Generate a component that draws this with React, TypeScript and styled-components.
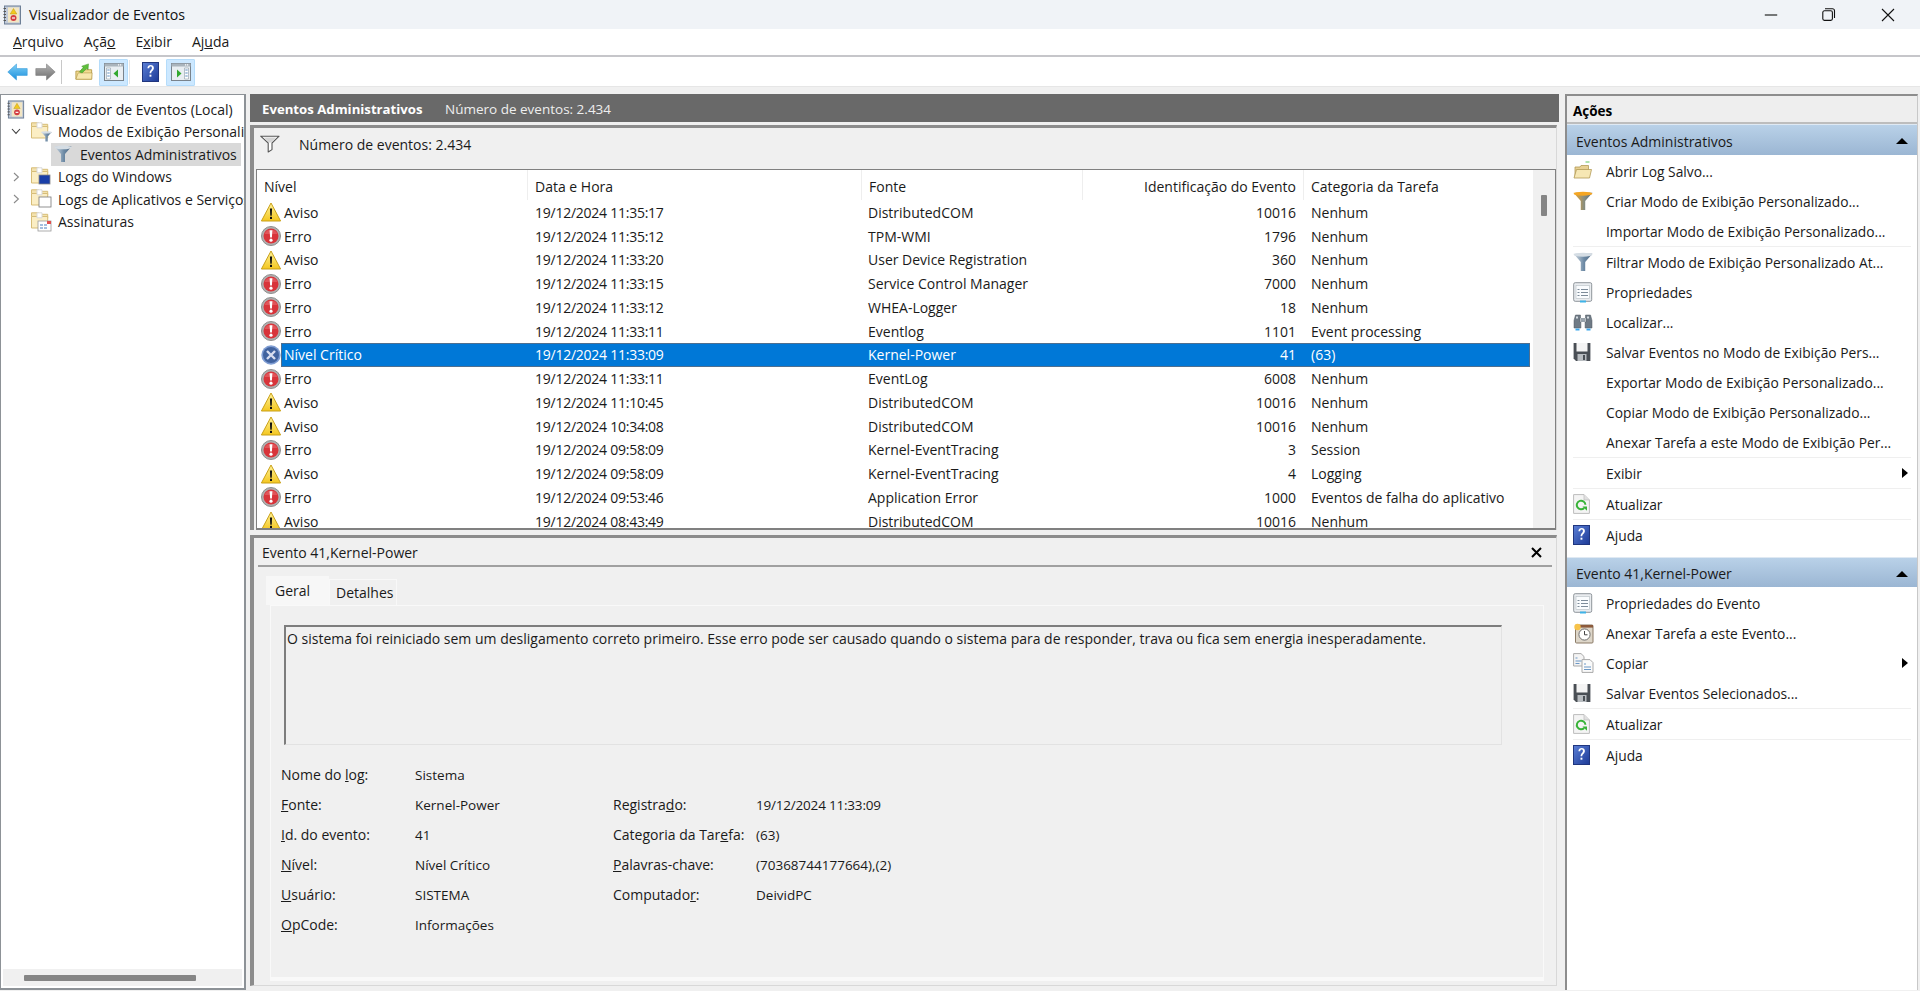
import React from "react";
import styled, { createGlobalStyle } from "styled-components";

const GlobalStyle = createGlobalStyle`
  html, body { margin: 0; padding: 0; height: 100%; overflow: hidden; background: #f0f0f0; }
  #root { height: 100%; }
  * { box-sizing: border-box; }
  body { font-family: "Open Sans", "Noto Sans", "Liberation Sans", sans-serif; font-size: 14px; color: #1a1a1a; }
`;

const Shell = styled.div`display: flex; flex-direction: column; width: 1920px; height: 991px; overflow: hidden;`;
const TitleBar = styled.div`height: 29px; background: #f0f3f7; display: flex; align-items: center; padding-left: 3px; gap: 6px; font-size: 14.2px; color: #111;`;
const TitleText = styled.span`flex: 1;`;
const WinButtons = styled.div`display: flex; align-items: center; margin-right: 3px;`;
const WinButton = styled.div`width: 58.5px; height: 29px; display: flex; align-items: center; justify-content: center;`;
const MenuBar = styled.div`height: 28px; background: #fff; border-bottom: 2px solid #c6c6ca; display: flex; align-items: center; padding: 0 0 2px 13px; gap: 20px; font-size: 14px;`;
const Toolbar = styled.div`height: 30px; background: #fff; border-bottom: 1px solid #e6e6e6; display: flex; align-items: center; padding: 1px 0 0 3px;`;
const ToolBtn = styled.div<{ $active?: boolean; $w: number; $ml?: number }>`
  width: ${p => p.$w}px; height: 27px; flex: none; display: flex; align-items: center; justify-content: center;
  margin-left: ${p => p.$ml ?? 0}px;
  background: ${p => (p.$active ? "#cce8ff" : "transparent")};
  border: 1px solid ${p => (p.$active ? "#b5dcfa" : "transparent")};
  border-radius: 1px;
`;
const ToolSep = styled.div`width: 1px; height: 24px; background: #c8c8c8; margin: 0 12px 0 2px;`;
const ToolSepLight = styled.div`width: 1px; height: 24px; background: #e6e6e6; margin: 0 11px 0 1px;`;
const Main = styled.div`flex: 1; min-height: 0; display: flex; padding: 7px 2px 1px 0; gap: 4px;`;

const LeftPane = styled.div`width: 246px; flex: none; background: #fff; border: 1px solid #8d9297; border-width: 1px 2px 2px 1px; display: flex; flex-direction: column; min-height: 0;`;
const Tree = styled.div`flex: 1; padding-top: 3px; overflow: hidden; white-space: nowrap;`;
const TreeRow = styled.div<{ $indent: number; $sel?: boolean }>`
  height: 22.5px; display: flex; align-items: center; padding-left: ${p => p.$indent}px; gap: 4px;
  background: ${p => (p.$sel ? "#d9d9d9" : "transparent")};
  ${p => p.$sel ? "margin: 0 3px 0 50px; padding-left: 3px;" : ""}
  & > svg { flex: none; }
`;
const TreeLabel = styled.span<{ $ml?: number }>`margin-left: ${p => p.$ml ?? 2}px; flex: none;`;
const Chevron = styled.span`width: 12px; flex: none; display: flex; justify-content: center; margin-right: 5px;`;
const HBar = styled.div`height: 17px; background: #f0f0f0; margin: 0 2px 2px 2px; display: flex; align-items: center; padding-left: 21px;`;
const HThumb = styled.div`width: 172px; height: 6px; background: #858585; border-radius: 1px;`;

const Center = styled.div`flex: 1; min-width: 0; display: flex; flex-direction: column; padding-right: 2px;`;
const CenterHead = styled.div`height: 28px; background: #696969; display: flex; align-items: center; padding: 2px 0 0 12px; font-size: 13.5px; color: #eee; flex: none;`;
const CenterTitle = styled.b`color: #fff; font-weight: 700; font-size: 13.2px; width: 183px;`;
const Frame = styled.div<{ $h: number }>`
  height: ${p => p.$h}px; flex: none; margin: 3px 2px 0 0; background: #f0f0f0;
  border-top: 3px solid #8c8c8c; border-left: 4px solid #8c8c8c; border-right: 1px solid #d8d8d8;
  display: flex; flex-direction: column; min-height: 0;
`;
const LowerFrame = styled(Frame)`border-bottom: 1px solid #d8d8d8;`;
const FilterBar = styled.div`height: 41px; flex: none; display: flex; align-items: flex-start; padding: 7px 0 0 6px; gap: 19px; font-size: 14px;`;
const List = styled.div`flex: 1; min-height: 0; margin-left: 2px; background: #fff; border: 1px solid #808080; border-bottom-width: 2px; display: flex; overflow: hidden;`;
const ListBody = styled.div`flex: 1; min-width: 0; display: flex; flex-direction: column; padding-right: 3px;`;
const COLS = "247px 333px 221px 221px 1fr";
const HeadRow = styled.div`height: 30.5px; flex: none; display: grid; grid-template-columns: 270px 334px 221px 221px 1fr;`;
const HeadCell = styled.div<{ $right?: boolean }>`
  font-size: 14px; padding: 2px 7px 0; height: 30px; display: flex; align-items: center; border-left: 1px solid #eee;
  justify-content: ${p => (p.$right ? "flex-end" : "flex-start")};
  &:first-child { border-left: 0; }
`;
const Row = styled.div`height: 23.75px; flex: none; display: flex;`;
const IconSlot = styled.div`width: 24px; flex: none; display: flex; align-items: center; justify-content: flex-start; padding-left: 4px;`;
const Cells = styled.div<{ $sel?: boolean }>`
  flex: 1; display: grid; grid-template-columns: ${COLS}; align-items: center; font-size: 14px;
  background: ${p => (p.$sel ? "#0078d7" : "transparent")};
  color: ${p => (p.$sel ? "#fff" : "#1a1a1a")};
  ${p => p.$sel ? "outline: 1px solid #4e6f90; outline-offset: -1px;" : ""}
`;
const Cell = styled.div<{ $right?: boolean }>`
  padding: 0 7px; white-space: nowrap; overflow: hidden; text-align: ${p => (p.$right ? "right" : "left")};
  &:first-child { padding-left: 3px; }
  &:nth-child(2) { letter-spacing: -0.25px; }
  &:last-child { padding-left: 8px; }
`;
const VTrack = styled.div`width: 22px; flex: none; background: #f0f0f0; padding: 25px 0 0 8px;`;
const VThumb = styled.div`width: 6px; height: 21px; background: #858585; border-radius: 1px;`;

const Divider = styled.div`height: 2px; flex: none;`;
const DetailHead = styled.div`height: 29px; flex: none; margin: 0 4px 0 4px; display: flex; align-items: center; justify-content: space-between; padding: 2px 10px 0 4px; border-bottom: 2px solid #a0a0a0; font-size: 14px;`;
const Tabs = styled.div`flex: none; display: flex; align-items: flex-end; margin: 9px 0 0 12px; height: 29px;`;
const Tab = styled.div<{ $on?: boolean; $w: number }>`
  width: ${p => p.$w}px; height: ${p => (p.$on ? 29 : 26)}px; display: flex; align-items: center;
  background: ${p => (p.$on ? "#f7f7f7" : "#f0f0f0")};
  border: 1px solid ${p => (p.$on ? "#f7f7f7" : "#f8f8f8")};
  border-bottom: 0;
  padding: 0 0 ${p => (p.$on ? 2 : 0)}px ${p => (p.$on ? 8 : 6)}px;
  font-size: 14px;
`;
const TabPanel = styled.div`flex: 1; min-height: 0; margin: 0 12px 4px 16px; background: #f0f0f0; border: 1px solid #f9f9f9; border-width: 1px 1px 4px 1px; padding: 19px 0 0 13px;`;
const MessageBox = styled.div`width: 1218px; height: 120px; border: 1px solid #e2e2e2; border-top: 2px solid #7d7d7d; border-left: 2px solid #7d7d7d; padding: 2px 1px; font-size: 14px;`;
const Details = styled.div`margin: 15px 0 0 -3px; display: grid; grid-template-columns: 134px 198px 143px 1fr; grid-auto-rows: 30px; align-items: center; font-size: 13.5px;`;
const DLabel = styled.div`color: #1a1a1a; margin-top: -2px; font-size: 14px; white-space: nowrap;`;
const DValue = styled.div<{ $tight?: boolean }>`letter-spacing: ${p => (p.$tight ? "-0.2px" : "normal")};`;

const RightPane = styled.div`width: 353px; flex: none; background: #fff; border: 2px solid #8d8d8d; border-right-color: #c8c8c8; border-right-width: 1px; border-bottom: 0; border-top-width: 2px; display: flex; flex-direction: column;`;
const ActionsTitle = styled.div`height: 28px; flex: none; background: #eee; display: flex; align-items: center; padding: 4px 0 0 6px; font-weight: 700; font-size: 13.5px; color: #000; border-bottom: 2px solid #bdbdbd;`;
const SectionHead = styled.div`height: 31px; flex: none; margin-bottom: 1px; background: linear-gradient(#b9d1e8, #9bb6d3); display: flex; align-items: center; justify-content: space-between; padding: 2px 9px 0 9px; font-size: 14px; color: #1a1a1a; border-top: 1px solid #dfe9f3;`;
const SectionHeadLow = styled(SectionHead)`margin-top: 7px; height: 30px; margin-bottom: 1px;`;
const TriUp = styled.span`width: 0; height: 0; border-left: 6px solid transparent; border-right: 6px solid transparent; border-bottom: 6px solid #000;`;
const TriRight = styled.span`width: 0; height: 0; border-top: 5.5px solid transparent; border-bottom: 5.5px solid transparent; border-left: 6px solid #000;`;
const Action = styled.div`height: 30px; flex: none; display: flex; align-items: center; font-size: 13.8px; padding-right: 9px; white-space: nowrap;`;
const ActionIcon = styled.span`width: 39px; flex: none; padding-left: 6px; display: flex; align-items: center;`;
const ActionLabel = styled.span`flex: 1;`;
const ActionSep = styled.div`height: 1px; flex: none; background: #efefef; margin: 0 6px;`;

/* ---------- drawings ---------- */
const Warn = () => (
  <svg width="20" height="20" viewBox="0 0 20 20">
    <defs><linearGradient id="w" x1="0" y1="0" x2="0" y2="1"><stop offset="0" stopColor="#fff39a" /><stop offset="1" stopColor="#f4c61f" /></linearGradient></defs>
    <path d="M10 1 19.6 19H.4Z" fill="url(#w)" stroke="#c9a019" strokeWidth="1" strokeLinejoin="round" />
    <path d="M8.9 6.5h2.2l-.4 7.2H9.3Z" fill="#111" /><rect x="9" y="14.8" width="2" height="2.2" fill="#111" />
  </svg>
);
const Err = () => (
  <svg width="20" height="20" viewBox="0 0 20 20">
    <circle cx="10" cy="10" r="9.5" fill="#b0b0b0" stroke="#8e8e8e" />
    <circle cx="10" cy="10" r="7.5" fill="#d8343a" />
    <path d="M3.4 8a7.2 7.2 0 0 1 13.2 0Z" fill="#e86a6e" opacity=".6" />
    <path d="M8.6 4.2h2.8l-.5 7.4H9.1Z" fill="#fff" /><circle cx="10" cy="14.2" r="1.6" fill="#fff" />
  </svg>
);
const Crit = () => (
  <svg width="20" height="20" viewBox="0 0 20 20">
    <circle cx="10" cy="10" r="9.7" fill="#7f9dd3" />
    <circle cx="10" cy="10" r="8" fill="#41639f" />
    <path d="M6 6 14 14M14 6 6 14" stroke="#d9def0" strokeWidth="2.4" />
  </svg>
);
const LEVEL = { Aviso: <Warn />, Erro: <Err />, Crit: <Crit /> };

const Funnel = ({ size = 18, top = "#d5dde4", bottom = "#6d8aa5", id = "fn" }: { size?: number; top?: string; bottom?: string; id?: string }) => (
  <svg width={size} height={size} viewBox="0 0 18 18">
    <defs><linearGradient id={id} x1="0" y1="0" x2="1" y2="0"><stop offset="0" stopColor={top} /><stop offset=".55" stopColor={bottom} /><stop offset="1" stopColor="#4f6a84" /></linearGradient></defs>
    <path d="M.5 1.5h17L11 9v8H7V9Z" fill={`url(#${id})`} />
    <ellipse cx="9" cy="2.4" rx="8.5" ry="1.8" fill={top} />
  </svg>
);
const FunnelOutline = () => (
  <svg width="20" height="18" viewBox="0 0 20 18">
    <path d="M.7 1.2h18.4L12 8v6.6L8.2 17V8Z" fill="#fff" stroke="#555" strokeWidth="1.1" strokeLinejoin="round" />
    <path d="M4 2.5h12L11 7.4H9Z" fill="#d4d4d4" />
  </svg>
);
const Folder = ({ children }: { children?: React.ReactNode }) => (
  <svg width="21" height="20" viewBox="0 0 21 20">
    <path d="M.5 4.5V.8h7l1.2 1.5h8v4" fill="#f3e2ae" stroke="#d7bd77" />
    <path d="M.5 16V4.5h16.2V16Z" fill="#fbeec4" stroke="#d7bd77" />
    <path d="M6 .8h5v5H6Z" fill="#fff" stroke="#d9d9d9" />
    {children}
  </svg>
);
const LogIcon = ({ s = 20 }: { s?: number }) => (
  <svg width={s} height={s} viewBox="0 0 20 20">
    <rect x="1.5" y="1" width="16" height="18" fill="#c1cad8" stroke="#6d7f96" />
    <rect x="5" y="2.4" width="11" height="15" fill="#f2e6c3" />
    <path d="M10.5 3.5 13.8 9H7.2Z" fill="#f2c81e" stroke="#b89617" strokeWidth=".5" />
    <circle cx="10.5" cy="13" r="3" fill="#d23d42" />
    <rect x="9" y="12.4" width="3" height="1.2" fill="#fff" />
    <path d="M.5 3.5h2.5M.5 6.5h2.5M.5 9.5h2.5M.5 12.5h2.5M.5 15.5h2.5" stroke="#555" strokeWidth="1" />
  </svg>
);
const ArrowLeft = () => (
  <svg width="21" height="18" viewBox="0 0 21 18">
    <defs><linearGradient id="al" x1="0" y1="0" x2="0" y2="1"><stop offset="0" stopColor="#7fd0f7" /><stop offset="1" stopColor="#1b8fdc" /></linearGradient></defs>
    <path d="M.8 9 9.5 1v4.6h10.7v6.8H9.5V17Z" fill="url(#al)" stroke="#3c9ddc" strokeWidth=".6" strokeLinejoin="round" />
  </svg>
);
const ArrowRight = () => (
  <svg width="21" height="18" viewBox="0 0 21 18">
    <defs><linearGradient id="ar" x1="0" y1="0" x2="0" y2="1"><stop offset="0" stopColor="#b4b4b4" /><stop offset="1" stopColor="#6e6e6e" /></linearGradient></defs>
    <path d="M20.2 9 11.5 1v4.6H.8v6.8h10.7V17Z" fill="url(#ar)" stroke="#808080" strokeWidth=".6" strokeLinejoin="round" />
  </svg>
);
const UpFolder = () => (
  <svg width="20" height="20" viewBox="0 0 20 20">
    <path d="M1 9h5l1-1.5h11.5V18H1Z" fill="#f2dc93" stroke="#b59a4a" />
    <path d="M1 18 3.5 11h15.5l-.5 7Z" fill="#f7e7ae" stroke="#b59a4a" strokeWidth=".7" />
    <path d="M5 10 9 5 7.5 3.5 15 1l-.5 6.5L13 6 8 11Z" fill="#5fbf3c" stroke="#3c8f22" strokeWidth=".5" />
  </svg>
);
const PaneIcon = ({ side }: { side: "left" | "right" }) => (
  <svg width="20" height="18" viewBox="0 0 20 18">
    <rect x=".5" y=".5" width="19" height="17" fill="#e9eef2" stroke="#79838c" />
    <rect x=".5" y=".5" width="19" height="3" fill="#aab4bc" />
    <path d="M14 1.2h1.2v1.2H14Zm2 0h1.2v1.2H16Z" fill="#fff" />
    {side === "left" ? (
      <>
        <path d="M2.5 5h4v11h-4Z" fill="#fff" stroke="#8c9aa6" strokeWidth=".6" />
        <path d="M3.3 7h2.4M3.3 10h2.4M3.3 13h2.4" stroke="#5f8fc0" strokeWidth="1" />
        <path d="M14 6.5 9.5 10.5 14 14.5Z" fill="#32a82e" />
      </>
    ) : (
      <>
        <path d="M13.5 5h4v11h-4Z" fill="#fff" stroke="#8c9aa6" strokeWidth=".6" />
        <path d="M14.3 7h2.4M14.3 10h2.4M14.3 13h2.4" stroke="#5f8fc0" strokeWidth="1" />
        <path d="M6 6.5 10.5 10.5 6 14.5Z" fill="#32a82e" />
      </>
    )}
  </svg>
);
const HelpIcon = () => (
  <svg width="17" height="20" viewBox="0 0 17 20">
    <defs><linearGradient id="hb" x1="0" y1="0" x2="1" y2="1"><stop offset="0" stopColor="#5b7fd6" /><stop offset="1" stopColor="#1c3a96" /></linearGradient></defs>
    <rect x=".5" y=".5" width="16" height="19" fill="url(#hb)" stroke="#20367f" />
    <path d="M5.4 6.2C5.5 3.9 6.9 3 8.7 3c1.9 0 3.2 1.1 3.2 2.9 0 2.6-2.5 2.7-2.7 5.4H7.6c0-3.3 2.3-3.4 2.3-5.4 0-.9-.5-1.4-1.3-1.4-.9 0-1.3.6-1.4 1.7Z" fill="#fff" />
    <rect x="7.5" y="12.7" width="1.9" height="2" fill="#fff" />
  </svg>
);
const Win = {
  min: <svg width="14" height="2" viewBox="0 0 14 2"><path d="M.8 1h12.4" stroke="#111" strokeWidth="1.1" /></svg>,
  max: <svg width="14" height="14" viewBox="0 0 14 14" fill="none" stroke="#111" strokeWidth="1.1"><rect x=".8" y="2.8" width="9.6" height="9.6" rx="1.6" /><path d="M3 .8h7.5a2 2 0 0 1 2 2V10" /></svg>,
  close: <svg width="14" height="14" viewBox="0 0 14 14" stroke="#111" strokeWidth="1.1"><path d="M1 1 13 13M13 1 1 13" /></svg>,
};
const OpenFolderIcon = () => (
  <svg width="20" height="20" viewBox="0 0 20 20">
    <path d="M2 6h5l1-1.5h7.5V16H2Z" fill="#e8d193" stroke="#b39a57" strokeWidth=".8" />
    <path d="M1 17 3.5 8.5h15L16.5 17Z" fill="#f6e7b4" stroke="#b39a57" strokeWidth=".8" />
    <path d="M12.5 1h4" stroke="#5fc45f" strokeWidth="1" />
  </svg>
);
const PropsIcon = () => (
  <svg width="20" height="21" viewBox="0 0 20 21">
    <rect x=".7" y=".7" width="18" height="18.6" rx="1.5" fill="#e9ecef" stroke="#8f959b" />
    <rect x="3" y="3.5" width="13.5" height="13" fill="#fafcfe" stroke="#b6bdc4" strokeWidth=".6" />
    <path d="M4.5 7.5h2M8 7.5h7M4.5 10.5h2M8 10.5h7M4.5 13.5h2M8 13.5h7" stroke="#7c8b99" strokeWidth="1" />
    <rect x="7" y="18.5" width="6" height="2" fill="#3fb3e8" />
  </svg>
);
const BinocIcon = () => (
  <svg width="20" height="20" viewBox="0 0 20 20">
    <path d="M2.5 3h5v3h-.5v4h.9v6H1V8.5Z" fill="#6f7a85" stroke="#515a63" strokeWidth=".5" />
    <path d="M17.5 3h-5v3h.5v4h-.9v6H19V8.5Z" fill="#6f7a85" stroke="#515a63" strokeWidth=".5" />
    <rect x="7.6" y="6" width="4.8" height="4" fill="#98a2ab" />
    <path d="M2.5 16.5h4v2h-4Zm11 0h4v2h-4Z" fill="#3ea7ec" />
    <path d="M3 4.5h2v2H3Zm11 0h2v2h-2Z" fill="#d5dce2" />
  </svg>
);
const SaveIcon = () => (
  <svg width="18" height="20" viewBox="0 0 18 20">
    <path d="M.6 1h16.8v18H3L.6 16.6Z" fill="#4a4f55" />
    <rect x="3.5" y="1" width="11" height="8.5" fill="#f4f4f4" />
    <rect x="4.5" y="12" width="9" height="7" fill="#b8bcc0" />
    <rect x="10" y="13" width="2" height="5" fill="#4a4f55" />
  </svg>
);
const RefreshIcon = () => (
  <svg width="17" height="20" viewBox="0 0 17 20">
    <path d="M.6.6H11L16.4 6V19.4H.6Z" fill="#f4f4f4" stroke="#bcbcbc" />
    <path d="M11 .6V6H16.4" fill="#e0e0e0" stroke="#bcbcbc" strokeWidth=".7" />
    <path d="M12.4 10.8A4.3 4.3 0 1 0 11.2 14" fill="none" stroke="#38b338" strokeWidth="2" />
    <path d="M9.5 12.5H14V16.8Z" fill="#38b338" />
  </svg>
);
const TaskIcon = () => (
  <svg width="21" height="21" viewBox="0 0 21 21">
    <rect x="2.5" y="2" width="17.5" height="18" rx="1" fill="#ddd6c9" stroke="#8b7b66" />
    <rect x="2.5" y="2" width="17.5" height="2.6" fill="#8c5a3c" />
    <circle cx="11.5" cy="11.5" r="5.6" fill="#fff" stroke="#6f6f6f" />
    <path d="M11.5 8v3.8h3" fill="none" stroke="#444" strokeWidth="1" />
    <circle cx="4.5" cy="4" r="3.2" fill="#f7c34a" />
  </svg>
);
const CopyIcon = () => (
  <svg width="21" height="20" viewBox="0 0 21 20">
    <path d="M.6.6H8L11 3.5V13H.6Z" fill="#f4f4f4" stroke="#a9a9a9" />
    <path d="M9 6.6h8l3 3V19.4H9Z" fill="#fafafa" stroke="#a9a9a9" />
    <path d="M2.5 5h2M2.5 8h6M2.5 10.5h4" stroke="#6c98c6" strokeWidth="1" />
    <path d="M11 11h2M11 14h7M11 16.5h7" stroke="#6c98c6" strokeWidth="1" />
  </svg>
);

const ChevDown = () => <svg width="10" height="7" viewBox="0 0 10 7"><path d="M1 1 5 5.4 9 1" fill="none" stroke="#404040" strokeWidth="1.1" /></svg>;
const ChevRight = () => <svg width="7" height="10" viewBox="0 0 7 10"><path d="M1 1 5.4 5 1 9" fill="none" stroke="#8a8a8a" strokeWidth="1.1" /></svg>;
const CloseX = () => <svg width="11" height="11" viewBox="0 0 11 11"><path d="M1 1 10 10M10 1 1 10" stroke="#000" strokeWidth="2" /></svg>;

/* ---------- data ---------- */
type Ev = [keyof typeof LEVEL, string, string, string, string, string?];
const EVENTS: Ev[] = [
  ["Aviso", "Aviso", "19/12/2024 11:35:17", "DistributedCOM", "10016", "Nenhum"],
  ["Erro", "Erro", "19/12/2024 11:35:12", "TPM-WMI", "1796", "Nenhum"],
  ["Aviso", "Aviso", "19/12/2024 11:33:20", "User Device Registration", "360", "Nenhum"],
  ["Erro", "Erro", "19/12/2024 11:33:15", "Service Control Manager", "7000", "Nenhum"],
  ["Erro", "Erro", "19/12/2024 11:33:12", "WHEA-Logger", "18", "Nenhum"],
  ["Erro", "Erro", "19/12/2024 11:33:11", "Eventlog", "1101", "Event processing"],
  ["Crit", "Nível Crítico", "19/12/2024 11:33:09", "Kernel-Power", "41", "(63)"],
  ["Erro", "Erro", "19/12/2024 11:33:11", "EventLog", "6008", "Nenhum"],
  ["Aviso", "Aviso", "19/12/2024 11:10:45", "DistributedCOM", "10016", "Nenhum"],
  ["Aviso", "Aviso", "19/12/2024 10:34:08", "DistributedCOM", "10016", "Nenhum"],
  ["Erro", "Erro", "19/12/2024 09:58:09", "Kernel-EventTracing", "3", "Session"],
  ["Aviso", "Aviso", "19/12/2024 09:58:09", "Kernel-EventTracing", "4", "Logging"],
  ["Erro", "Erro", "19/12/2024 09:53:46", "Application Error", "1000", "Eventos de falha do aplicativo"],
  ["Aviso", "Aviso", "19/12/2024 08:43:49", "DistributedCOM", "10016", "Nenhum"],
];

type Act = { icon?: React.ReactNode; label: string; more?: boolean } | "sep";
const FIRST: Act[] = [
  { icon: <OpenFolderIcon />, label: "Abrir Log Salvo..." },
  { icon: <Funnel size={20} top="#f5a623" bottom="#8a8f80" id="fo" />, label: "Criar Modo de Exibição Personalizado..." },
  { label: "Importar Modo de Exibição Personalizado..." },
  "sep",
  { icon: <Funnel size={20} id="fb" />, label: "Filtrar Modo de Exibição Personalizado At..." },
  { icon: <PropsIcon />, label: "Propriedades" },
  { icon: <BinocIcon />, label: "Localizar..." },
  { icon: <SaveIcon />, label: "Salvar Eventos no Modo de Exibição Pers..." },
  { label: "Exportar Modo de Exibição Personalizado..." },
  { label: "Copiar Modo de Exibição Personalizado..." },
  { label: "Anexar Tarefa a este Modo de Exibição Per..." },
  "sep",
  { label: "Exibir", more: true },
  "sep",
  { icon: <RefreshIcon />, label: "Atualizar" },
  "sep",
  { icon: <HelpIcon />, label: "Ajuda" },
];
const SECOND: Act[] = [
  { icon: <PropsIcon />, label: "Propriedades do Evento" },
  { icon: <TaskIcon />, label: "Anexar Tarefa a este Evento..." },
  { icon: <CopyIcon />, label: "Copiar", more: true },
  { icon: <SaveIcon />, label: "Salvar Eventos Selecionados..." },
  "sep",
  { icon: <RefreshIcon />, label: "Atualizar" },
  "sep",
  { icon: <HelpIcon />, label: "Ajuda" },
];

const Actions = ({ items }: { items: Act[] }) => (
  <>
    {items.map((a, i) =>
      a === "sep" ? <ActionSep key={i} /> : (
        <Action key={i}>
          <ActionIcon>{a.icon}</ActionIcon>
          <ActionLabel>{a.label}</ActionLabel>
          {a.more && <TriRight />}
        </Action>
      )
    )}
  </>
);

export default function App() {
  return (
    <Shell>
      <GlobalStyle />
      <TitleBar>
        <LogIcon />
        <TitleText>Visualizador de Eventos</TitleText>
        <WinButtons>
          <WinButton>{Win.min}</WinButton>
          <WinButton>{Win.max}</WinButton>
          <WinButton>{Win.close}</WinButton>
        </WinButtons>
      </TitleBar>
      <MenuBar>
        <span><u>A</u>rquivo</span>
        <span>Açã<u>o</u></span>
        <span>E<u>x</u>ibir</span>
        <span>Aj<u>u</u>da</span>
      </MenuBar>
      <Toolbar>
        <ToolBtn $w={28}><ArrowLeft /></ToolBtn>
        <ToolBtn $w={28}><ArrowRight /></ToolBtn>
        <ToolSep />
        <ToolBtn $w={20}><UpFolder /></ToolBtn>
        <ToolBtn $w={29} $ml={5} $active><PaneIcon side="left" /></ToolBtn>
        <ToolSepLight />
        <ToolBtn $w={19}><HelpIcon /></ToolBtn>
        <ToolBtn $w={29} $ml={6} $active><PaneIcon side="right" /></ToolBtn>
      </Toolbar>
      <Main>
        <LeftPane>
          <Tree>
            <TreeRow $indent={6}><LogIcon s={19} /><TreeLabel $ml={3}>Visualizador de Eventos (Local)</TreeLabel></TreeRow>
            <TreeRow $indent={9}><Chevron><ChevDown /></Chevron><Folder><g transform="translate(10 9)"><Funnel size={11} id="fs" /></g></Folder><TreeLabel>Modos de Exibição Personaliz</TreeLabel></TreeRow>
            <TreeRow $indent={0} $sel><Funnel size={18} id="ft" /><TreeLabel $ml={4}>Eventos Administrativos</TreeLabel></TreeRow>
            <TreeRow $indent={9}><Chevron><ChevRight /></Chevron><Folder><rect x="8" y="8" width="11" height="9" fill="#1a3fa8" stroke="#888" strokeWidth=".8" /></Folder><TreeLabel>Logs do Windows</TreeLabel></TreeRow>
            <TreeRow $indent={9}><Chevron><ChevRight /></Chevron><Folder><rect x="8" y="8" width="12" height="10" fill="#fff" stroke="#777" strokeWidth=".8" /></Folder><TreeLabel>Logs de Aplicativos e Serviços</TreeLabel></TreeRow>
            <TreeRow $indent={30}><Folder><rect x="7" y="9" width="13" height="10" fill="#fff" stroke="#999" strokeWidth=".8" /><rect x="16" y="9" width="4" height="3" fill="#e0504f" /><path d="M9 13h3M13 13h3M9 16h3M13 16h3" stroke="#4a7fc0" strokeWidth="1" /></Folder><TreeLabel>Assinaturas</TreeLabel></TreeRow>
          </Tree>
          <HBar><HThumb /></HBar>
        </LeftPane>
        <Center>
          <CenterHead><CenterTitle>Eventos Administrativos</CenterTitle><span>Número de eventos: 2.434</span></CenterHead>
          <Frame $h={405}>
            <FilterBar><FunnelOutline /><span>Número de eventos: 2.434</span></FilterBar>
            <List>
              <ListBody>
                <HeadRow>
                  <HeadCell>Nível</HeadCell>
                  <HeadCell>Data e Hora</HeadCell>
                  <HeadCell>Fonte</HeadCell>
                  <HeadCell $right>Identificação do Evento</HeadCell>
                  <HeadCell>Categoria da Tarefa</HeadCell>
                </HeadRow>
                {EVENTS.map((e, i) => (
                  <Row key={i}>
                    <IconSlot>{LEVEL[e[0]]}</IconSlot>
                    <Cells $sel={e[0] === "Crit"}>
                      <Cell>{e[1]}</Cell>
                      <Cell>{e[2]}</Cell>
                      <Cell>{e[3]}</Cell>
                      <Cell $right>{e[4]}</Cell>
                      <Cell>{e[5]}</Cell>
                    </Cells>
                  </Row>
                ))}
              </ListBody>
              <VTrack><VThumb /></VTrack>
            </List>
          </Frame>
          <Divider />
          <LowerFrame $h={451}>
            <DetailHead><span>Evento 41,Kernel-Power</span><CloseX /></DetailHead>
            <Tabs>
              <Tab $on $w={63}>Geral</Tab>
              <Tab $w={68}>Detalhes</Tab>
            </Tabs>
            <TabPanel>
              <MessageBox>O sistema foi reiniciado sem um desligamento correto primeiro. Esse erro pode ser causado quando o sistema para de responder, trava ou fica sem energia inesperadamente.</MessageBox>
              <Details>
                <DLabel>Nome do <u>l</u>og:</DLabel><DValue>Sistema</DValue><div /><div />
                <DLabel><u>F</u>onte:</DLabel><DValue>Kernel-Power</DValue><DLabel>Registra<u>d</u>o:</DLabel><DValue $tight>19/12/2024 11:33:09</DValue>
                <DLabel><u>I</u>d. do evento:</DLabel><DValue>41</DValue><DLabel>Categoria da Tar<u>e</u>fa:</DLabel><DValue>(63)</DValue>
                <DLabel><u>N</u>ível:</DLabel><DValue>Nível Crítico</DValue><DLabel><u>P</u>alavras-chave:</DLabel><DValue>(70368744177664),(2)</DValue>
                <DLabel><u>U</u>suário:</DLabel><DValue>SISTEMA</DValue><DLabel>Computado<u>r</u>:</DLabel><DValue>DeividPC</DValue>
                <DLabel><u>O</u>pCode:</DLabel><DValue>Informações</DValue><div /><div />
              </Details>
            </TabPanel>
          </LowerFrame>
        </Center>
        <RightPane>
          <ActionsTitle>Ações</ActionsTitle>
          <SectionHead><span>Eventos Administrativos</span><TriUp /></SectionHead>
          <Actions items={FIRST} />
          <SectionHeadLow><span>Evento 41,Kernel-Power</span><TriUp /></SectionHeadLow>
          <Actions items={SECOND} />
        </RightPane>
      </Main>
    </Shell>
  );
}
